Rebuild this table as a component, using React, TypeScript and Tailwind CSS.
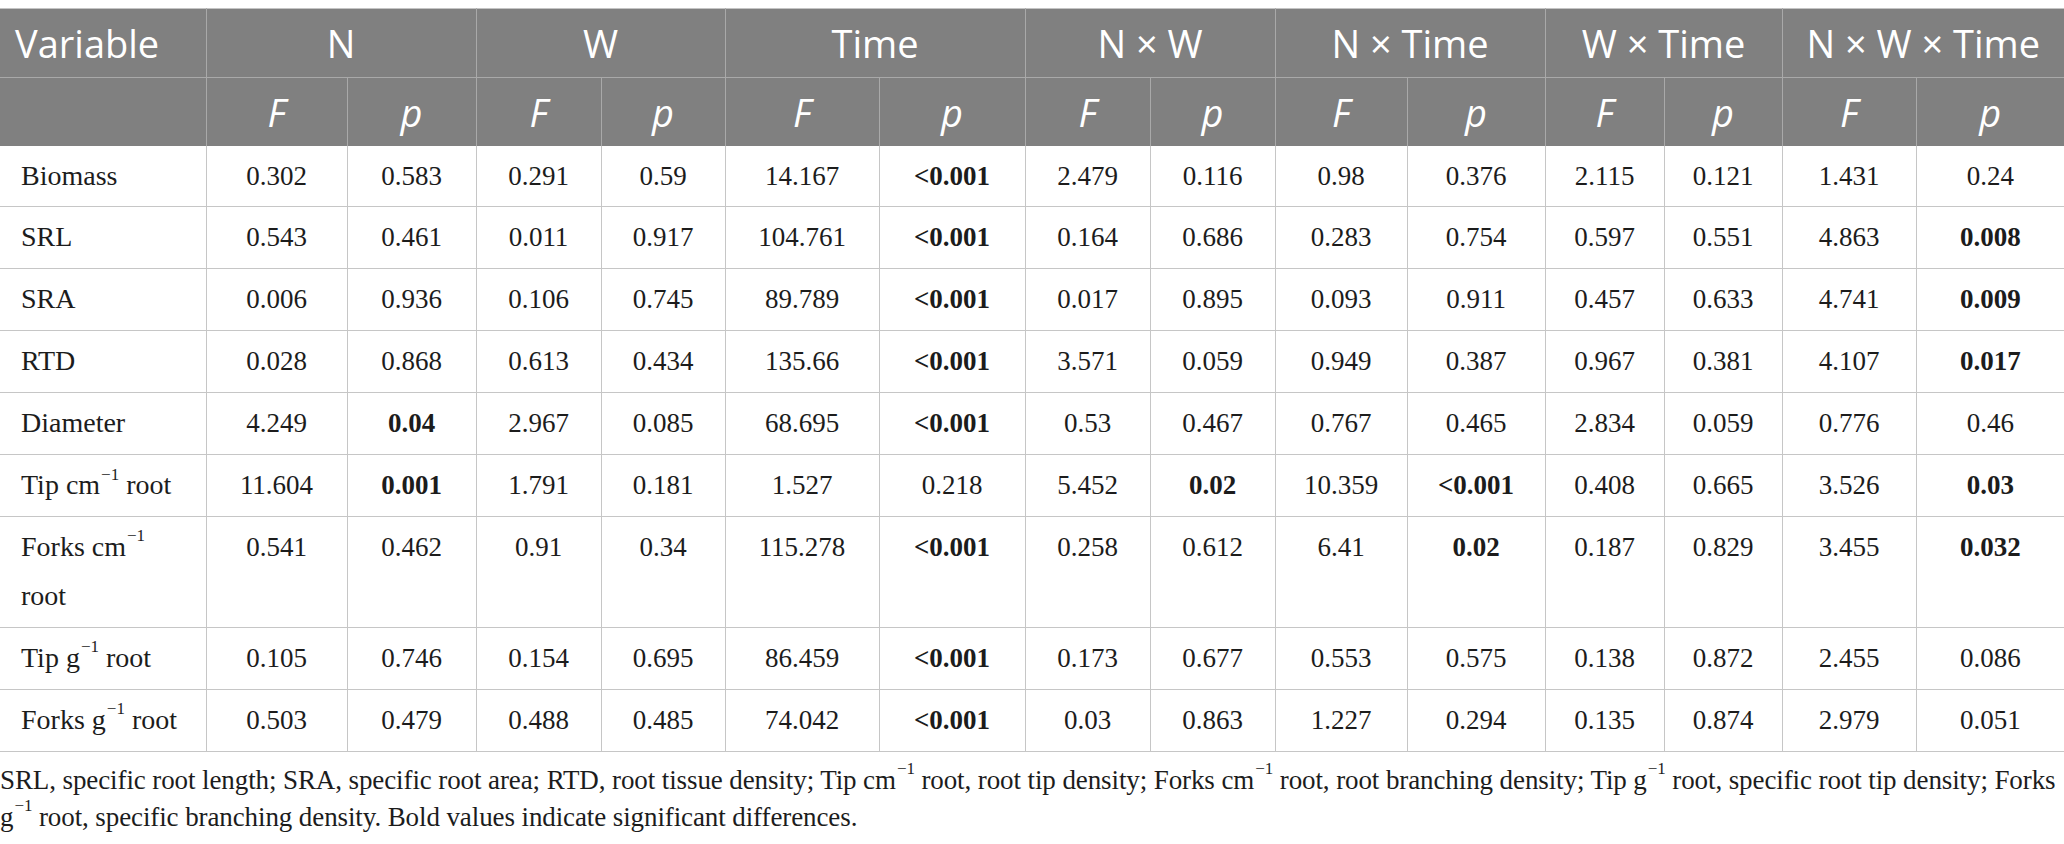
const widths = [206, 141, 129, 125, 124, 154, 146, 125, 125, 132, 138, 119, 118, 134, 148];

const groups = ['N', 'W', 'Time', 'N × W', 'N × Time', 'W × Time', 'N × W × Time'];

function Sup({ children }: { children: React.ReactNode }) {
  return <sup className="text-[17px] align-[6px] ml-[1px]">{children}</sup>;
}

// a trailing * marks a bold (significant) value
const rows: { label: React.ReactNode; values: string[] }[] = [
  { label: 'Biomass', values: ['0.302', '0.583', '0.291', '0.59', '14.167', '<0.001*', '2.479', '0.116', '0.98', '0.376', '2.115', '0.121', '1.431', '0.24'] },
  { label: 'SRL', values: ['0.543', '0.461', '0.011', '0.917', '104.761', '<0.001*', '0.164', '0.686', '0.283', '0.754', '0.597', '0.551', '4.863', '0.008*'] },
  { label: 'SRA', values: ['0.006', '0.936', '0.106', '0.745', '89.789', '<0.001*', '0.017', '0.895', '0.093', '0.911', '0.457', '0.633', '4.741', '0.009*'] },
  { label: 'RTD', values: ['0.028', '0.868', '0.613', '0.434', '135.66', '<0.001*', '3.571', '0.059', '0.949', '0.387', '0.967', '0.381', '4.107', '0.017*'] },
  { label: 'Diameter', values: ['4.249', '0.04*', '2.967', '0.085', '68.695', '<0.001*', '0.53', '0.467', '0.767', '0.465', '2.834', '0.059', '0.776', '0.46'] },
  {
    label: (
      <>
        Tip cm<Sup>−1</Sup> root
      </>
    ),
    values: ['11.604', '0.001*', '1.791', '0.181', '1.527', '0.218', '5.452', '0.02*', '10.359', '<0.001*', '0.408', '0.665', '3.526', '0.03*'],
  },
  {
    label: (
      <>
        Forks cm<Sup>−1</Sup>
        <br />
        root
      </>
    ),
    values: ['0.541', '0.462', '0.91', '0.34', '115.278', '<0.001*', '0.258', '0.612', '6.41', '0.02*', '0.187', '0.829', '3.455', '0.032*'],
  },
  {
    label: (
      <>
        Tip g<Sup>−1</Sup> root
      </>
    ),
    values: ['0.105', '0.746', '0.154', '0.695', '86.459', '<0.001*', '0.173', '0.677', '0.553', '0.575', '0.138', '0.872', '2.455', '0.086'],
  },
  {
    label: (
      <>
        Forks g<Sup>−1</Sup> root
      </>
    ),
    values: ['0.503', '0.479', '0.488', '0.485', '74.042', '<0.001*', '0.03', '0.863', '1.227', '0.294', '0.135', '0.874', '2.979', '0.051'],
  },
];

export default function App() {
  return (
    <div className="w-[2064px] h-[844px] bg-white overflow-hidden pt-[8px]">
      <table className="table-fixed border-collapse w-[2064px]">
        <colgroup>
          {widths.map((w, i) => (
            <col key={i} style={{ width: w }} />
          ))}
        </colgroup>
        <thead className="bg-[#808080] text-white font-['Open_Sans',sans-serif] text-[38px]">
          <tr className="h-[69px] border-t border-[#c4c4c4]">
            <th className="text-left font-normal pl-[15px] border-r border-b border-[#a9a9a9] leading-none">Variable</th>
            {groups.map((g) => (
              <th key={g} colSpan={2} className="font-normal border-r border-b border-[#a9a9a9] leading-none last:border-r-0">
                {g}
              </th>
            ))}
          </tr>
          <tr className="h-[68px]">
            <th className="border-r border-[#a9a9a9]" />
            {groups.map((g) => (
              <>
                <th key={g + 'F'} className="font-normal italic border-r border-[#a9a9a9] leading-none">F</th>
                <th key={g + 'p'} className="font-normal italic border-r border-[#a9a9a9] leading-none last:border-r-0">p</th>
              </>
            ))}
          </tr>
        </thead>
        <tbody className="font-['Liberation_Serif',serif] text-[27px] text-[#1c1c1c]">
          {rows.map((r, i) => (
            <tr key={i} className="h-[61px] border-b border-[#c6c6c6]">
              <td className="align-top pl-[21px] pr-0 py-[6px] leading-[48.9px] border-r border-[#c6c6c6] text-[28px]">{r.label}</td>
              {r.values.map((v, j) => {
                const bold = v.endsWith('*');
                return (
                  <td
                    key={j}
                    className={
                      'align-top text-center py-[6px] leading-[48.9px] border-r border-[#c6c6c6] last:border-r-0 ' +
                      (bold ? 'font-bold' : '')
                    }
                  >
                    {bold ? v.slice(0, -1) : v}
                  </td>
                );
              })}
            </tr>
          ))}
        </tbody>
      </table>
      <p className="font-['Liberation_Serif',serif] text-[27px] leading-[37px] text-[#1c1c1c] mt-[10px] whitespace-nowrap tracking-[-0.1px]">
        SRL, specific root length; SRA, specific root area; RTD, root tissue density; Tip cm<Sup>−1</Sup> root, root tip density; Forks cm
        <Sup>−1</Sup> root, root branching density; Tip g<Sup>−1</Sup> root, specific root tip density; Forks
        <br />
        g<Sup>−1</Sup> root, specific branching density. Bold values indicate significant differences.
      </p>
    </div>
  );
}
